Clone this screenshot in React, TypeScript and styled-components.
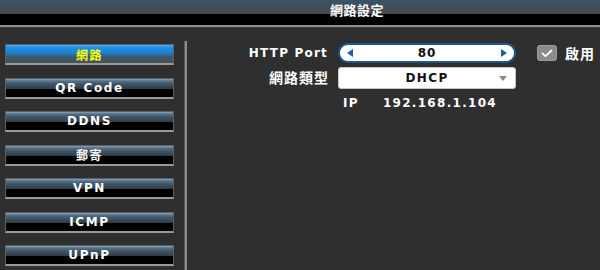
import React from "react";
import styled, { createGlobalStyle, css } from "styled-components";

const Global = createGlobalStyle`
  html, body { margin: 0; padding: 0; background: #2f2f2f; }
  body { font-family: "DejaVu Sans", "Noto Sans CJK TC", sans-serif; }
`;

const Screen = styled.div`
  width: 600px;
  height: 270px;
  overflow: hidden;
  background: #2f2f2f;
  display: flex;
  flex-direction: column;
  font-family: "DejaVu Sans", "Noto Sans CJK TC", sans-serif;
`;

const Header = styled.div`
  height: 25px;
  flex: none;
  background: linear-gradient(
    to bottom,
    #3a5467 0px,
    #434c53 9px,
    #484848 14px,
    #000 14px,
    #000 25px
  );
  border-bottom: 2px solid #8e8e8e;
  display: flex;
  align-items: flex-start;
  padding-left: 330px;
`;

const Title = styled.div`
  margin-top: 4px;
  color: #fff;
  font-weight: bold;
  font-size: 13px;
  line-height: 14px;
  letter-spacing: 0.5px;
`;

const Body = styled.div`
  flex: 1;
  display: flex;
  border-top: 1px solid #363636;
`;

const Sidebar = styled.div`
  width: 169px;
  padding: 16px 10px 0 5px;
  display: flex;
  flex-direction: column;
  gap: 12.5px;
`;

const MenuButton = styled.div<{ $active?: boolean }>`
  height: 18px;
  box-sizing: content-box;
  border: 1px solid #5e5e5e;
  border-bottom: 2px solid #9a9a9a;
  display: flex;
  align-items: center;
  justify-content: center;
  font-weight: bold;
  font-size: 12px;
  letter-spacing: 1.6px;
  color: #fff;
  ${(p) =>
    p.$active
      ? css`
          color: #ffff00;
          background: linear-gradient(
            to bottom,
            #55b0f5 0px,
            #2192e8 2px,
            #1b7fcf 8px,
            #3f5767 12px,
            #46515a 18px
          );
        `
      : css`
          background: linear-gradient(
            to bottom,
            #86a6bf 0px,
            #56718a 2px,
            #405565 5px,
            #313d46 9.5px,
            #000 10px,
            #000 18px
          );
        `}
`;

const Divider = styled.div`
  width: 2px;
  margin-top: 13px;
  background: #8c8c8c;
  border-left: 1px solid #5a5a5a;
`;

const Panel = styled.div`
  flex: 1;
  padding: 15px 0 0 0;
`;

const Form = styled.div`
  display: grid;
  grid-template-columns: 141px 178px auto;
  column-gap: 10px;
  row-gap: 4px;
  align-items: center;
`;

const Label = styled.div`
  text-align: right;
  color: #fff;
  font-weight: bold;
  font-size: 12px;
  letter-spacing: 1.2px;
  line-height: 20px;
`;

const CjkLabel = styled(Label)`
  font-size: 14px;
  letter-spacing: 1px;
  margin-right: -1px;
`;

const Spin = styled.div`
  height: 16px;
  border: 2px solid #1c5a8e;
  border-radius: 10px;
  background: #fff;
  display: flex;
  align-items: center;
  justify-content: space-between;
  padding: 0 7px;
  font-weight: bold;
  font-size: 12px;
  color: #111;
  letter-spacing: 1px;
`;

const Arrow = styled.div<{ $dir: "left" | "right" }>`
  width: 0;
  height: 0;
  border-top: 4px solid transparent;
  border-bottom: 4px solid transparent;
  ${(p) =>
    p.$dir === "left"
      ? css`
          border-right: 6px solid #1b5fa0;
        `
      : css`
          border-left: 6px solid #1b5fa0;
        `}
`;

const Select = styled.div`
  height: 20px;
  border-radius: 3px;
  background: #fff;
  border: 1px solid #c8c8c8;
  display: flex;
  align-items: center;
  position: relative;
  justify-content: center;
  font-weight: bold;
  font-size: 12px;
  letter-spacing: 1.4px;
  color: #111;
`;

const Caret = styled.div`
  position: absolute;
  right: 8px;
  top: 8px;
  width: 0;
  height: 0;
  border-left: 4px solid transparent;
  border-right: 4px solid transparent;
  border-top: 5px solid #8a8a8a;
`;

const Enable = styled.label`
  display: flex;
  align-items: center;
  gap: 8px;
  margin-left: 11px;
  color: #fff;
  font-weight: bold;
  font-size: 14px;
  letter-spacing: 1px;
`;

const Check = styled.span`
  width: 20px;
  height: 16px;
  border-radius: 4px;
  background: #8b8b8b;
  box-shadow: inset 0 0 0 1px #9c9c9c;
  display: flex;
  align-items: center;
  justify-content: center;
`;

const IpRow = styled.div`
  grid-column: 2 / 4;
  display: flex;
  gap: 24px;
  padding-left: 5px;
  margin-top: 3px;
  color: #fff;
  font-weight: bold;
  font-size: 12px;
  letter-spacing: 1.3px;
`;

const menu = ["網路", "QR Code", "DDNS", "郵寄", "VPN", "ICMP", "UPnP"];

export default function App() {
  return (
    <Screen>
      <Global />
      <Header>
        <Title>網路設定</Title>
      </Header>
      <Body>
        <Sidebar>
          {menu.map((m, i) => (
            <MenuButton key={m} $active={i === 0}>
              {m}
            </MenuButton>
          ))}
        </Sidebar>
        <Divider />
        <Panel>
          <Form>
            <Label>HTTP Port</Label>
            <Spin>
              <Arrow $dir="left" />
              <span>80</span>
              <Arrow $dir="right" />
            </Spin>
            <Enable>
              <Check>
                <svg width="12" height="9" viewBox="0 0 12 9">
                  <path
                    d="M1.5 4.5 L4.5 7.2 L10.5 1.5"
                    fill="none"
                    stroke="#fff"
                    strokeWidth="1.8"
                    strokeLinecap="round"
                    strokeLinejoin="round"
                  />
                </svg>
              </Check>
              啟用
            </Enable>
            <CjkLabel>網路類型</CjkLabel>
            <Select>
              DHCP
              <Caret />
            </Select>
            <span />
            <span />
            <IpRow>
              <span>IP</span>
              <span>192.168.1.104</span>
            </IpRow>
          </Form>
        </Panel>
      </Body>
    </Screen>
  );
}
